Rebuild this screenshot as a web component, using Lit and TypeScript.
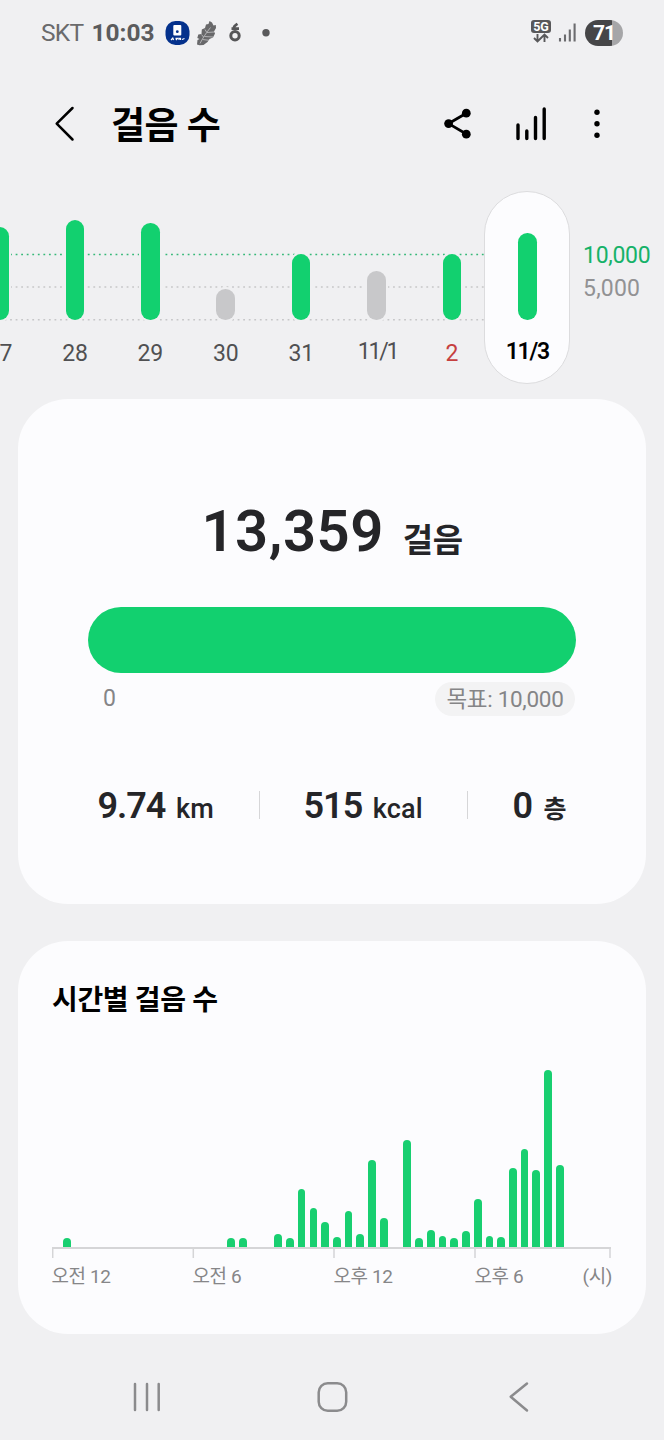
import { LitElement, html, svg, css } from "lit";
import { customElement } from "lit/decorators.js";
import { styleMap } from "lit/directives/style-map.js";
import { classMap } from "lit/directives/class-map.js";

interface Day {
  label: string;
  height: number;
  kind?: "missed" | "";
  tone?: "sunday" | "slash" | "selected";
}

const DAYS: Day[] = [
  { label: "27", height: 93 },
  { label: "28", height: 99.5 },
  { label: "29", height: 96.3 },
  { label: "30", height: 30.5, kind: "missed" },
  { label: "31", height: 65.5 },
  { label: "11/1", height: 48.5, kind: "missed", tone: "slash" },
  { label: "2", height: 65.5, tone: "sunday" },
  { label: "11/3", height: 86.5, tone: "selected" },
];

// Half-hour slots, starting at midnight; heights in pixels.
const SLOTS: number[] = [
  9, 0, 0, 0, 0, 0, 0, 0, 0, 0, 0, 0, 0, 0, 9, 9, 0, 0, 12.5, 9, 58, 39, 24.5,
  9.5, 36, 13, 87, 29, 0, 107, 9, 17, 11, 9, 16, 48, 11, 9.5, 79, 98, 76.5,
  177, 82,
];

const fonts = css`
  :host {
    font-family: Roboto, "Noto Sans CJK KR", sans-serif;
  }
`;

@customElement("status-bar")
export class StatusBar extends LitElement {
  static styles = [
    fonts,
    css`
      :host {
        display: flex;
        align-items: center;
        height: 66px;
        padding: 0 41px;
        box-sizing: border-box;
        color: #5b5b5d;
        font-size: 24.5px;
        line-height: 30px;
      }
      .carrier {
        width: 50.5px;
        letter-spacing: -0.7px;
        color: #6a6a6c;
      }
      .clock {
        width: 73px;
        font-weight: 700;
      }
      .notices {
        flex: 1;
      }
      svg {
        display: block;
      }
      .battery {
        width: 38px;
        height: 26px;
        margin-left: 9px;
        border-radius: 13px;
        background: linear-gradient(90deg, #464648 71%, #a6a6a8 71%);
        color: #fff;
        font-size: 21px;
        font-weight: 700;
        line-height: 26px;
        text-align: center;
        letter-spacing: -1px;
      }
    `,
  ];

  render() {
    return html`
      <span class="carrier">SKT</span>
      <span class="clock">10:03</span>
      <div class="notices">
        <svg width="108" height="28" viewBox="0 0 108 28">
          <rect x="0.5" y="2" width="24" height="24" rx="10" fill="#04318c" />
          <rect x="8.3" y="6" width="8" height="10.5" rx="1" fill="#fff" />
          <circle cx="12.3" cy="12.7" r="1.4" fill="#04318c" />
          <path d="M6 21l1.800-2 .8 2M10.500 19.300h2l-1.600 1.700M14 21v-1.700h1.500V21M17 20.500l2.500-1" stroke="#fff" stroke-width="1.200" fill="none" />
          <path d="M44.500 2l2.500 1.500 1.500 3 2.300-.5.2 3-2 3.500 1 2-2 4-3.500 1.500-2 3-4 3-4 .3-2.500-.8.5-4.500 2-1-2.200-1 1-3.500 3.200-.5.300-4.500 3.200-1.500 1-3.500 2.500-.5z" fill="#68686a" />
          <path d="M35 24.500c3-6 6.500-11 10.500-16M39.500 17.500l8.500.5M37.500 20.500l6.500.8M42 13.500l7-.5M36.500 15.500l2 2.500M40 10.500l1.500 2.500" stroke="#c4c4c6" stroke-width="0.800" fill="none" />
          <circle cx="70" cy="16.700" r="4.200" fill="none" stroke="#555557" stroke-width="3" />
          <path d="M66.500 9.600h7.500M69 9c-.5-2 1-2.500 3.500-4.200" fill="none" stroke="#555557" stroke-width="2.600" />
          <circle cx="101" cy="13.800" r="3.700" fill="#59595b" />
        </svg>
      </div>
      <svg width="46" height="28" viewBox="0 0 46 28">
        <rect x="1" y="1" width="20" height="13" rx="3" fill="#58585a" />
        <text x="11" y="12" text-anchor="middle" font-size="12.500" font-weight="700" fill="#fff">5G</text>
        <path d="M7.500 15v7.500M4 19l3.500 3.500L11 19M14.500 23v-7.500M11 19l3.500-3.500L18 19" fill="none" stroke="#58585a" stroke-width="1.900" />
        <path d="M30 19v3.500M35 15.500v7M39.800 10.500v12M44.600 4.500v18" stroke="#6c6c6f" stroke-width="2.100" />
      </svg>
      <div class="battery">71</div>
    `;
  }
}

@customElement("title-bar")
export class TitleBar extends LitElement {
  static styles = [
    fonts,
    css`
      :host {
        display: flex;
        align-items: center;
        height: 116px;
        padding: 0 58px 0 52px;
        box-sizing: border-box;
      }
      .title {
        flex: 1;
        margin: 5px 0 0 31px;
        font-size: 37px;
        line-height: 50px;
        font-weight: 700;
        letter-spacing: -0.5px;
        color: #000;
      }
      svg {
        display: block;
      }
    `,
  ];

  render() {
    return html`
      <svg width="28" height="40" viewBox="0 0 28 40">
        <path d="M20.500 4L4.700 19.700 20.500 35.500" fill="none" stroke="#000" stroke-width="2.500" stroke-linecap="round" stroke-linejoin="round" />
      </svg>
      <h1 class="title">걸음 수</h1>
      <svg width="166" height="40" viewBox="0 0 166 40">
        <path d="M26.300 9.200L8.600 19.600 26.300 30" fill="none" stroke="#000" stroke-width="2.800" />
        <circle cx="8.600" cy="19.600" r="4.400" />
        <circle cx="26.300" cy="9.200" r="4.400" />
        <circle cx="26.300" cy="30.200" r="4.400" />
        <g stroke="#000" stroke-width="3.400" stroke-linecap="round">
          <path d="M78 21v13.500M86.800 27v7.500M95.500 13.500v21M104.200 5v29.500" />
        </g>
        <circle cx="157" cy="8.300" r="2.700" />
        <circle cx="157" cy="19.700" r="2.700" />
        <circle cx="157" cy="31.200" r="2.700" />
      </svg>
    `;
  }
}

@customElement("week-chart")
export class WeekChart extends LitElement {
  static styles = [
    fonts,
    css`
      :host {
        display: flex;
        position: relative;
        height: 217px;
        overflow: hidden;
      }
      .grid {
        position: absolute;
        left: 0;
        top: 0;
      }
      .days {
        display: flex;
        flex: none;
        margin-left: -38.200px;
        width: 603.200px;
      }
      .day {
        position: relative;
        flex: 1;
        display: flex;
        flex-direction: column;
        align-items: center;
      }
      .plot {
        position: relative;
        display: flex;
        align-items: flex-end;
        height: 137.500px;
      }
      .bar {
        width: 18.600px;
        border-radius: 9.300px;
        background: #12d06f;
        box-shadow: 0 0 0 2px #f0f0f2;
      }
      .missed {
        background: #c8c8ca;
      }
      .label {
        position: relative;
        margin-top: 19.500px;
        font-size: 23px;
        line-height: 30px;
        letter-spacing: -0.200px;
        color: #505052;
      }
      .sunday .label {
        color: #c6403f;
      }
      .slash .label,
      .selected .label {
        margin-top: 17.500px;
      }
      .slash .label {
        padding-left: 2px;
        letter-spacing: -2.200px;
      }
      .selected .label {
        color: #000;
        font-weight: 600;
        letter-spacing: -1.200px;
      }
      .selected .bar {
        box-shadow: none;
      }
      .capsule {
        position: absolute;
        left: 50%;
        top: 8.500px;
        width: 86px;
        height: 193px;
        margin-left: -43px;
        box-sizing: border-box;
        border: 1px solid #dcdcde;
        border-radius: 43px;
        background: #fcfcfe;
      }
      .scale {
        display: flex;
        flex-direction: column;
        margin-left: 18px;
        padding-top: 58px;
        font-size: 23px;
        line-height: 32.500px;
        letter-spacing: -0.300px;
        color: #929294;
      }
      .half {
        letter-spacing: 0.200px;
      }
      .goal {
        color: #16b269;
      }
    `,
  ];

  private renderDay(day: Day) {
    const tone = day.tone ?? "";
    return html`
      <div class=${"day " + tone}>
        ${tone === "selected" ? html`<div class="capsule"></div>` : null}
        <div class="plot">
          <div
            class=${classMap({ bar: true, missed: day.kind === "missed" })}
            style=${styleMap({ height: `${day.height}px` })}
          ></div>
        </div>
        <div class="label">${day.label}</div>
      </div>
    `;
  }

  render() {
    return html`
      <svg class="grid" width="484" height="217">
        <g stroke-dasharray="1.800 3.750" stroke-dashoffset="1" stroke-width="1.500">
          <path d="M0 72.500H484" stroke="#35b878" />
          <path d="M0 105H484M0 137.700H484" stroke="#c6c6c8" />
        </g>
      </svg>
      <div class="days">${DAYS.map((d) => this.renderDay(d))}</div>
      <div class="scale">
        <span class="goal">10,000</span>
        <span class="half">5,000</span>
      </div>
    `;
  }
}

@customElement("today-card")
export class TodayCard extends LitElement {
  static styles = [
    fonts,
    css`
      :host {
        display: flex;
        flex-direction: column;
        height: 505px;
        margin: 0 18px;
        box-sizing: border-box;
        border-radius: 50px;
        background: #fcfcfe;
        color: #252528;
      }
      .total {
        display: flex;
        justify-content: center;
        align-items: baseline;
        gap: 19px;
        margin-top: 96px;
        height: 72px;
        line-height: 72px;
        font-size: 58px;
        font-weight: 600;
        letter-spacing: 0.500px;
      }
      .total-unit {
        position: relative;
        top: 1px;
        font-size: 33px;
        font-weight: 700;
        letter-spacing: -0.500px;
      }
      .progress {
        height: 66px;
        margin: 40px 70px 0;
        border-radius: 34px;
        background: #12d06f;
      }
      .range {
        display: flex;
        justify-content: space-between;
        margin: 9px 71px 0 85px;
        color: #858587;
        font-size: 23px;
        line-height: 34px;
      }
      .target {
        width: 140px;
        height: 34px;
        border-radius: 17px;
        background: #f3f3f4;
        text-align: center;
        white-space: nowrap;
        font-size: 22.500px;
        letter-spacing: -0.300px;
      }
      .stats {
        display: grid;
        grid-template-columns: 162px 208px 1fr;
        margin: 69.500px 56px 0 79.500px;
        line-height: 40px;
        font-size: 36px;
        font-weight: 600;
        white-space: nowrap;
      }
      .stat {
        display: flex;
        align-items: baseline;
        gap: 10.500px;
        letter-spacing: -1px;
      }
      .middle {
        padding-left: 45px;
      }
      .last {
        padding-left: 46px;
      }
      .ruled {
        background: linear-gradient(#d6d6d8, #d6d6d8) left 5px / 1px 28px no-repeat;
      }
      .ruled {
        margin-left: -1px;
        padding-right: 1px;
      }
      .unit {
        font-size: 27px;
        font-weight: 500;
        letter-spacing: 0.200px;
      }
      .hangul {
        margin-left: 1px;
        font-size: 25px;
        font-weight: 700;
      }
    `,
  ];

  render() {
    return html`
      <div class="total">
        <span>13,359</span><span class="total-unit">걸음</span>
      </div>
      <div class="progress"></div>
      <div class="range">
        <span>0</span>
        <span class="target">목표: 10,000</span>
      </div>
      <div class="stats">
        <div class="stat"><span>9.74</span><span class="unit">km</span></div>
        <div class="stat middle ruled"><span>515</span><span class="unit">kcal</span></div>
        <div class="stat last ruled"><span>0</span><span class="unit hangul">층</span></div>
      </div>
    `;
  }
}

@customElement("hourly-card")
export class HourlyCard extends LitElement {
  static styles = [
    fonts,
    css`
      :host {
        display: flex;
        flex-direction: column;
        height: 393px;
        margin: 37px 18px 0;
        padding: 0 34px;
        box-sizing: border-box;
        border-radius: 50px;
        background: #fcfcfe;
      }
      .title {
        margin: 40px 0 0;
        font-size: 28px;
        line-height: 40px;
        font-weight: 700;
        letter-spacing: -0.350px;
        color: #000;
      }
      .bars {
        display: flex;
        align-items: flex-end;
        height: 187.500px;
        margin-top: 38px;
        padding-left: 9.100px;
      }
      .slot {
        flex: none;
        display: flex;
        justify-content: center;
        width: 11.735px;
      }
      .bar {
        width: 7.700px;
        border-radius: 4px 4px 0 0;
        background: #18cf70;
      }
      .axis {
        display: block;
        flex: none;
      }
      .labels {
        display: grid;
        grid-template-columns: 141px 141px 141px 1fr auto;
        margin: 5.500px 0 0 -0.500px;
        font-size: 19px;
        line-height: 26px;
        letter-spacing: -0.400px;
        color: #868688;
        white-space: nowrap;
      }
    `,
  ];

  render() {
    return html`
      <h2 class="title">시간별 걸음 수</h2>
      <div class="bars">
        ${SLOTS.map(
          (h) => html`<div class="slot">
            <div class="bar" style=${styleMap({ height: `${h}px` })}></div>
          </div>`
        )}
      </div>
      <svg class="axis" width="560" height="12">
        <path d="M0 1H559" stroke="#d5d5d7" stroke-width="2" />
        ${[0.7, 141.3, 282, 423, 558].map(
          (x) => svg`<path d=${`M${x} 1V11`} stroke="#d5d5d7" stroke-width="1.500" />`
        )}
      </svg>
      <div class="labels">
        <span>오전 12</span><span>오전 6</span><span>오후 12</span><span>오후 6</span><span>(시)</span>
      </div>
    `;
  }
}

@customElement("nav-bar")
export class NavBar extends LitElement {
  static styles = css`
    :host {
      display: flex;
      justify-content: space-between;
      align-items: center;
      height: 106px;
      padding: 20px 130px 0 130px;
      box-sizing: border-box;
    }
    svg {
      display: block;
      fill: none;
      stroke: #8b8b8d;
      stroke-width: 2.500px;
      stroke-linecap: round;
      stroke-linejoin: round;
    }
  `;

  render() {
    return html`
      <svg width="34" height="34" viewBox="0 0 34 34">
        <path d="M5 4v26M17 4v26M28.700 4v26" />
      </svg>
      <svg width="34" height="34" viewBox="0 0 34 34">
        <rect x="3.700" y="3.200" width="27.500" height="27.500" rx="9" />
      </svg>
      <svg width="34" height="34" viewBox="0 0 34 34">
        <path d="M27 3.500L10.700 16.800 27 30.500" />
      </svg>
    `;
  }
}

@customElement("app-root")
export class AppRoot extends LitElement {
  static styles = css`
    :host {
      display: flex;
      flex-direction: column;
      width: 664px;
      height: 1440px;
      overflow: hidden;
      background: #f0f0f2;
    }
  `;

  render() {
    return html`
      <status-bar></status-bar>
      <title-bar></title-bar>
      <week-chart></week-chart>
      <today-card></today-card>
      <hourly-card></hourly-card>
      <nav-bar></nav-bar>
    `;
  }
}
